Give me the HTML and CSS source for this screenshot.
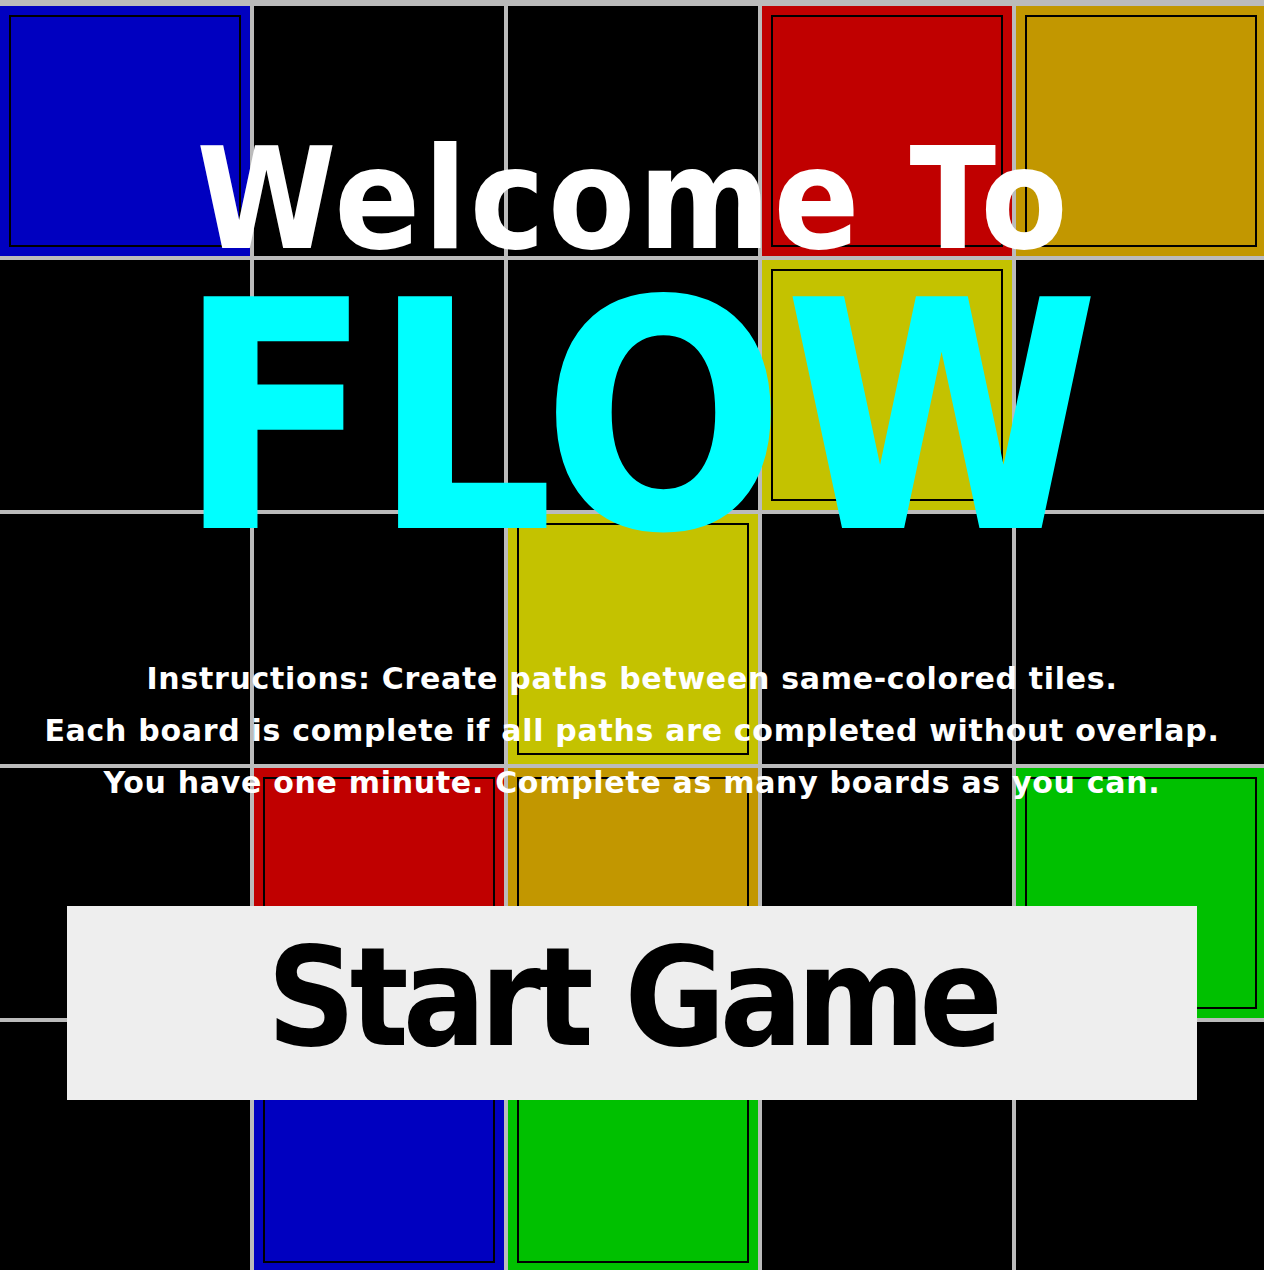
FILE: index.html
```html
<!DOCTYPE html>
<html>
<head>
<meta charset="utf-8">
<title>Flow</title>
<link rel="stylesheet" href="styles.css">
</head>
<body>
<div class="stage">
  <div class="board">
    <div class="cell blue"><div class="tile"></div></div>
    <div class="cell"></div>
    <div class="cell"></div>
    <div class="cell red"><div class="tile"></div></div>
    <div class="cell gold"><div class="tile"></div></div>

    <div class="cell"></div>
    <div class="cell"></div>
    <div class="cell"></div>
    <div class="cell yellow"><div class="tile"></div></div>
    <div class="cell"></div>

    <div class="cell"></div>
    <div class="cell"></div>
    <div class="cell yellow"><div class="tile"></div></div>
    <div class="cell"></div>
    <div class="cell"></div>

    <div class="cell"></div>
    <div class="cell red"><div class="tile"></div></div>
    <div class="cell gold"><div class="tile"></div></div>
    <div class="cell"></div>
    <div class="cell green"><div class="tile"></div></div>

    <div class="cell"></div>
    <div class="cell blue"><div class="tile"></div></div>
    <div class="cell green"><div class="tile"></div></div>
    <div class="cell"></div>
    <div class="cell"></div>
  </div>

  <div class="overlay">
    <h1 class="welcome">Welcome To</h1>
    <h2 class="flow">FLOW</h2>
    <p class="instructions">Instructions: Create paths between same-colored tiles.<br>Each board is complete if all paths are completed without overlap.<br>You have one minute. Complete as many boards as you can.</p>
    <button class="start">Start Game</button>
  </div>
</div>
</body>
</html>
```

FILE: styles.css
```css
html, body {
  margin: 0;
  padding: 0;
  background: #bbbbbb;
  overflow: hidden;
}

.stage {
  position: relative;
  width: 1266px;
  height: 1270px;
}

.board {
  display: grid;
  grid-template-columns: repeat(5, 250px);
  grid-template-rows: repeat(5, 250px);
  gap: 4px;
  padding-top: 6px;
  background: #bbbbbb;
}

.cell {
  background: #000000;
  padding: 9px;
  box-sizing: border-box;
}

.tile {
  width: 100%;
  height: 100%;
  box-sizing: border-box;
  border: 2px solid #000000;
}

.blue { background: #0000c0; }
.red { background: #c00000; }
.gold { background: #c29700; }
.yellow { background: #c4c200; }
.green { background: #00c000; }

.overlay {
  position: absolute;
  top: 0;
  left: 0;
  width: 1264px;
  height: 1270px;
  display: flex;
  flex-direction: column;
  align-items: center;
  padding-top: 139px;
  box-sizing: border-box;
  font-family: "DejaVu Sans", "Liberation Sans", sans-serif;
  font-weight: bold;
}

.welcome {
  margin: 0;
  font-family: "DejaVu Sans Condensed", "DejaVu Sans", sans-serif;
  font-stretch: condensed;
  font-size: 141px;
  line-height: 120px;
  color: #ffffff;
  font-weight: bold;
  letter-spacing: 3px;
  padding-left: 3px;
}

.flow {
  margin: 29px 0 0 0;
  font-family: "DejaVu Sans Condensed", "DejaVu Sans", sans-serif;
  font-stretch: condensed;
  font-size: 318px;
  line-height: 260px;
  color: #00ffff;
  font-weight: bold;
  letter-spacing: -1px;
  padding-left: 12px;
}

.instructions {
  margin: 105px 0 0 0;
  font-size: 30px;
  line-height: 52px;
  color: #ffffff;
  text-align: center;
  letter-spacing: 0.7px;
}

.start {
  margin-top: 97px;
  width: 1130px;
  height: 194px;
  box-sizing: border-box;
  padding: 23px 0 0 0;
  background: #eeeeee;
  border: none;
  font-family: "DejaVu Sans Condensed", "DejaVu Sans", sans-serif;
  font-stretch: condensed;
  font-weight: bold;
  font-size: 137px;
  line-height: 137px;
  letter-spacing: -6px;
  color: #000000;
  display: flex;
  justify-content: center;
  align-items: flex-start;
}
```
